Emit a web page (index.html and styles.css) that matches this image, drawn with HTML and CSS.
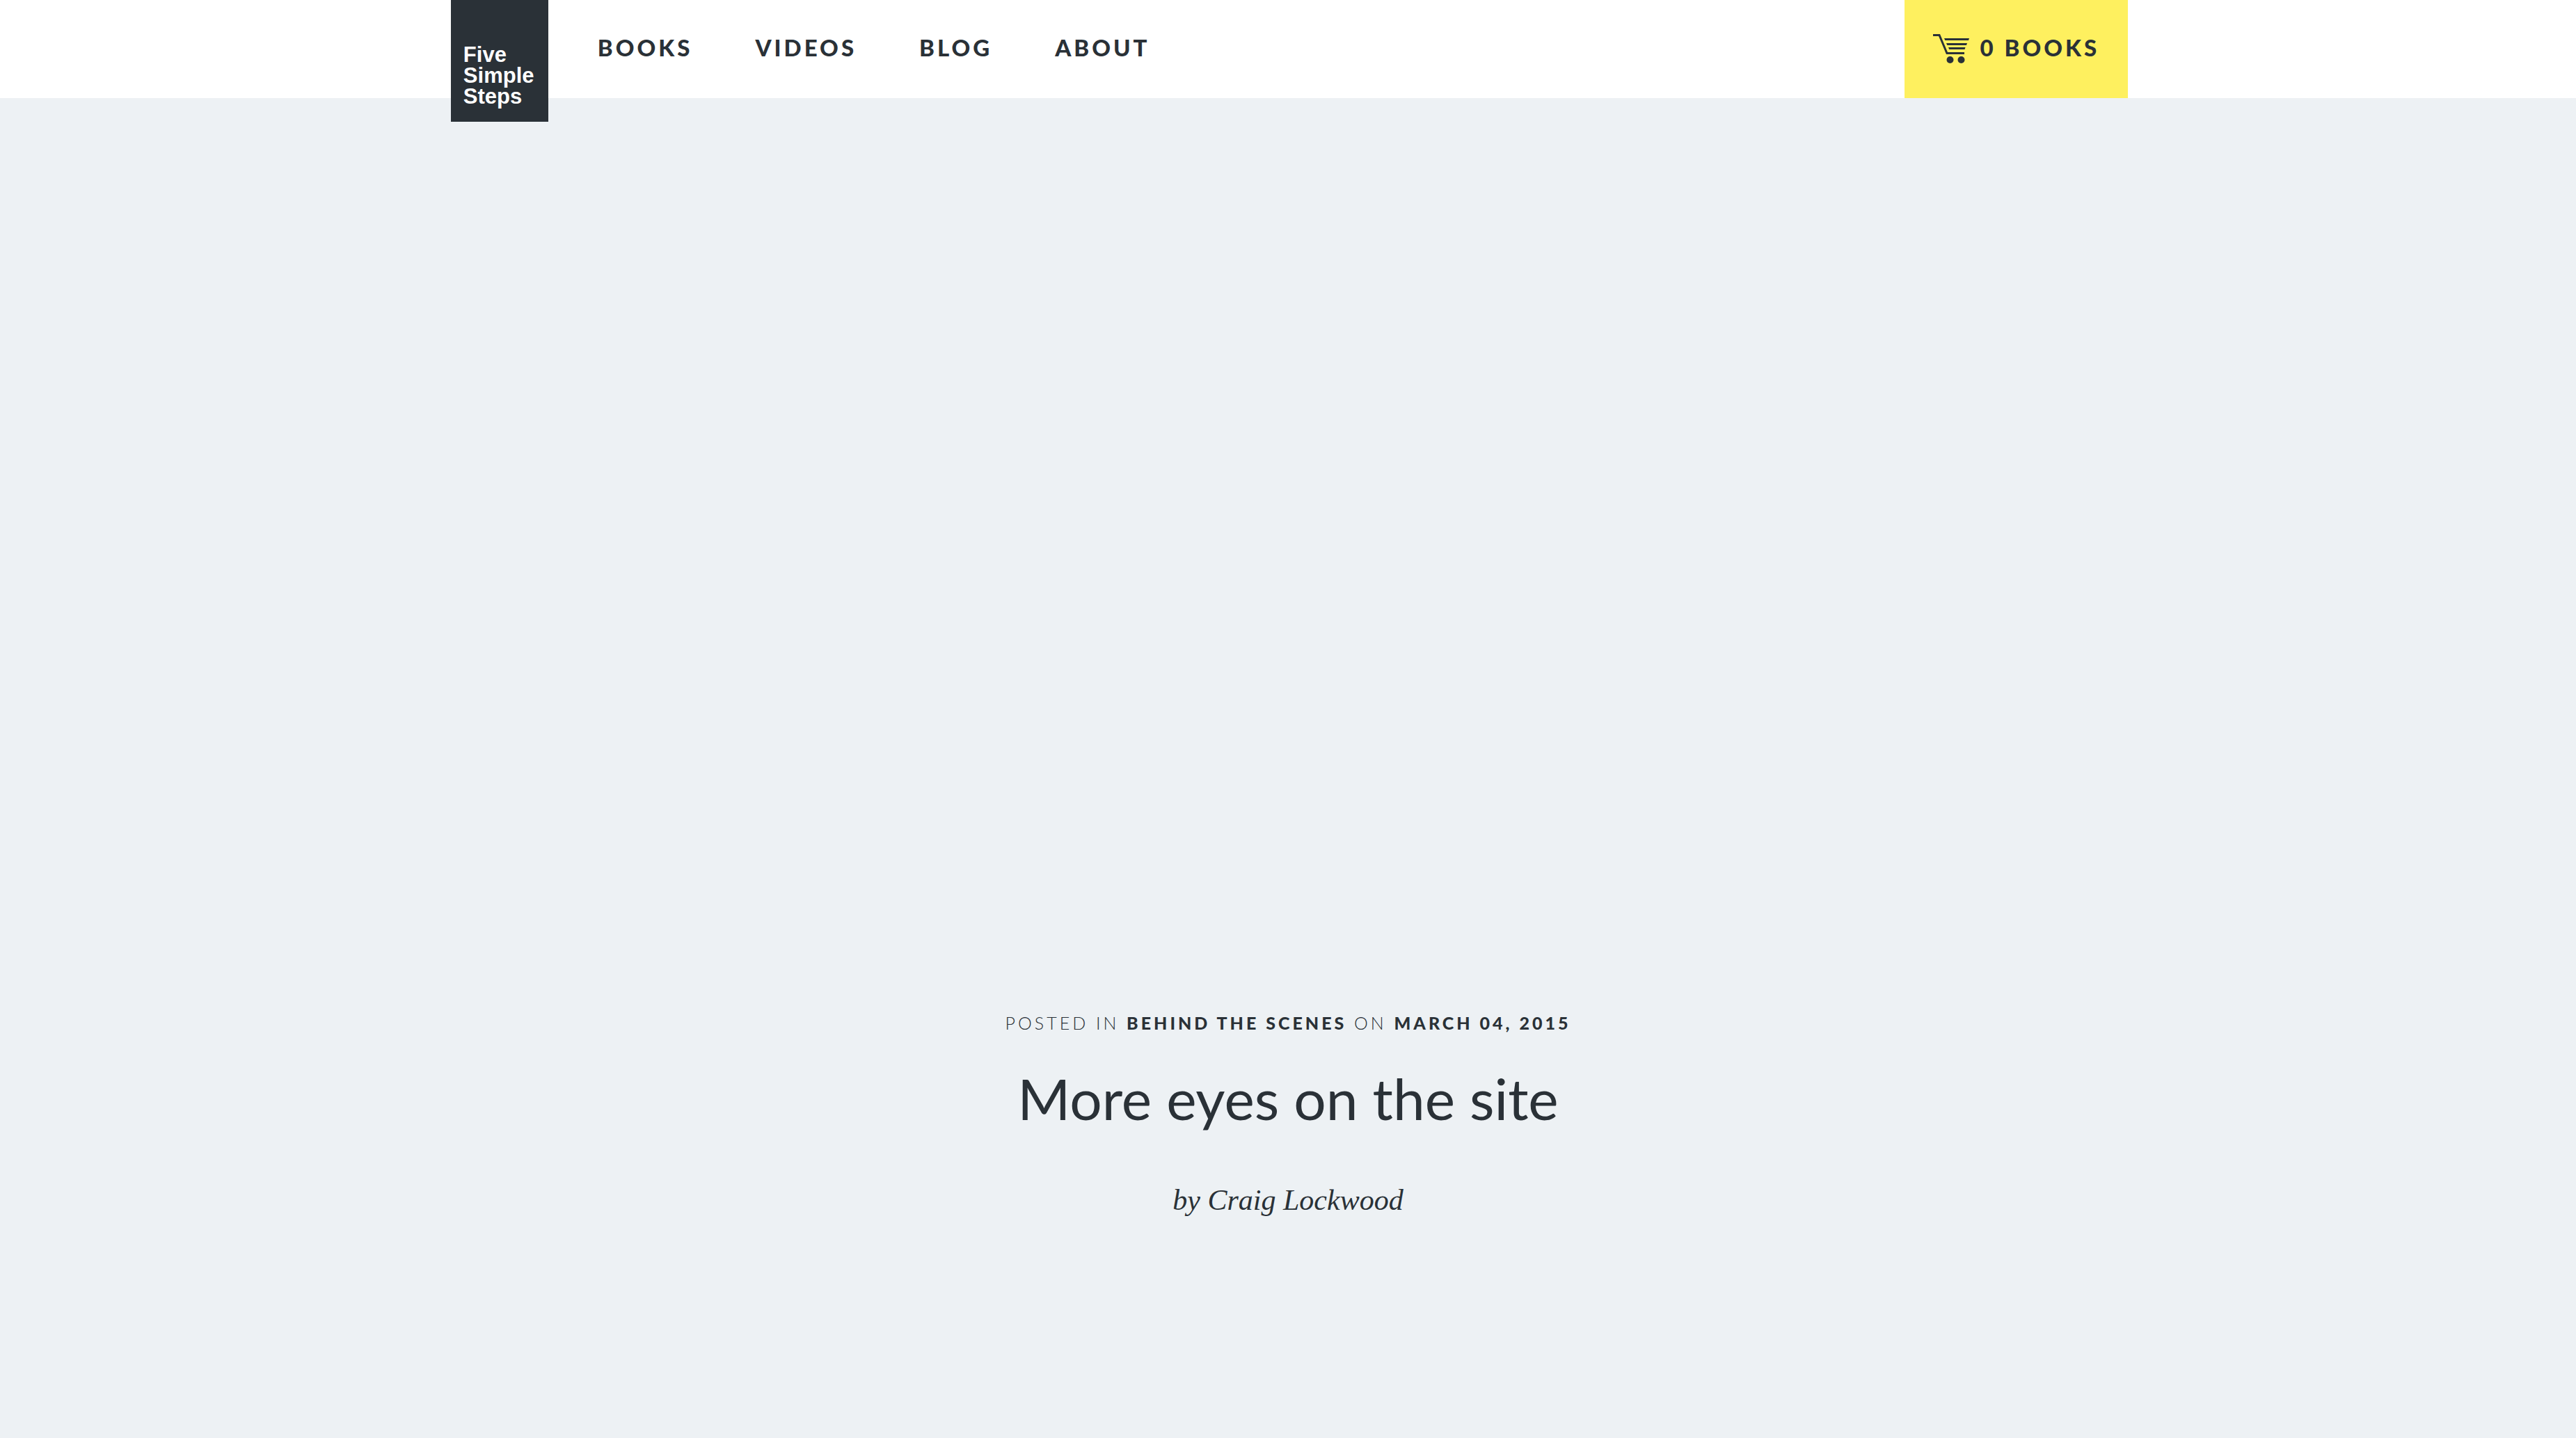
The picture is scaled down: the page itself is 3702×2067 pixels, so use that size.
FILE: index.html
```html
<!DOCTYPE html>
<html lang="en">
<head>
<meta charset="utf-8">
<meta name="viewport" content="width=device-width, initial-scale=1">
<title>More eyes on the site – Five Simple Steps</title>
<link rel="stylesheet" href="styles.css">
</head>
<body>
<header class="site-header">
  <a class="logo" href="#">Five<br>Simple<br>Steps</a>
  <nav class="main-nav">
    <a href="#">BOOKS</a>
    <a href="#">VIDEOS</a>
    <a href="#">BLOG</a>
    <a href="#">ABOUT</a>
  </nav>
  <a class="basket" href="#">
    <svg class="basket-icon" viewBox="0 0 52 43" aria-hidden="true">
      <path d="M0 2.5H9L20 28.5H45" fill="none" stroke="currentColor" stroke-width="3"/>
      <path d="M16 7H52L51 10H17.300ZM19 14H49L48 17H20.300ZM22 20H46.500L45.500 23H23.200Z" fill="currentColor"/>
      <circle cx="24.500" cy="38" r="5" fill="currentColor"/>
      <circle cx="40.500" cy="38" r="5" fill="currentColor"/>
    </svg>
    <span>0 BOOKS</span>
  </a>
</header>
<main class="hero">
  <p class="meta">POSTED IN <a href="#">BEHIND THE SCENES</a> ON <time datetime="2015-03-04">MARCH 04, 2015</time></p>
  <h1 class="title">More eyes on the site</h1>
  <p class="byline">by Craig Lockwood</p>
</main>
</body>
</html>
```
FILE: styles.css
```css
* {
  box-sizing: border-box;
}

body {
  display: flex;
  flex-direction: column;
  min-height: 100vh;
  margin: 0;
  background: #edf1f4;
  color: #2a3137;
  font-family: Lato, "Liberation Sans", sans-serif;
}

a {
  color: inherit;
  text-decoration: none;
}

.site-header {
  display: flex;
  align-items: flex-start;
  height: 141px;
  padding: 0 17.4% 0 17.5%;
  background: #fff;
  font-size: 33px;
  font-weight: 900;
  letter-spacing: 4px;
  white-space: nowrap;
}

.logo {
  width: 140px;
  height: 175px;
  padding: 64px 0 0 18px;
  background: #2a3137;
  color: #fff;
  font: bold 31px/30px "Liberation Sans", Arial, sans-serif;
  letter-spacing: normal;
}

.main-nav {
  display: flex;
  gap: 90px;
  margin-left: 71px;
  line-height: 137px;
}

.basket {
  display: flex;
  justify-content: center;
  gap: 16px;
  width: 321px;
  height: 141px;
  margin-left: auto;
  background: #fef05f;
  line-height: 137px;
}

.basket-icon {
  width: 52px;
  height: 43px;
  margin-top: 48px;
}

.hero {
  display: flex;
  flex: 1;
  flex-direction: column;
  justify-content: flex-end;
  padding: 240px 32px 312px;
  text-align: center;
}

.meta {
  margin: 0 0 28px;
  font-size: 25px;
  font-weight: 300;
  letter-spacing: 4px;
  line-height: 40px;
}

.meta a,
.meta time {
  font-weight: 900;
}

.title {
  margin: 0 0 57px;
  font-size: 82px;
  font-weight: 400;
  line-height: 120px;
}

.byline {
  margin: 0;
  font: italic 42px/60px "Liberation Serif", "Times New Roman", serif;
}
```
